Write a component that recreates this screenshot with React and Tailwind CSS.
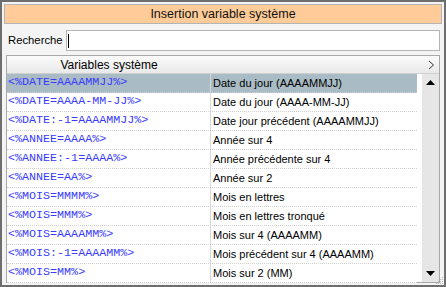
import React from "react";

const rows = [
  ["<%DATE=AAAAMMJJ%>", "Date du jour (AAAAMMJJ)"],
  ["<%DATE=AAAA-MM-JJ%>", "Date du jour (AAAA-MM-JJ)"],
  ["<%DATE:-1=AAAAMMJJ%>", "Date jour précédent (AAAAMMJJ)"],
  ["<%ANNEE=AAAA%>", "Année sur 4"],
  ["<%ANNEE:-1=AAAA%>", "Année précédente sur 4"],
  ["<%ANNEE=AA%>", "Année sur 2"],
  ["<%MOIS=MMMM%>", "Mois en lettres"],
  ["<%MOIS=MMM%>", "Mois en lettres tronqué"],
  ["<%MOIS=AAAAMM%>", "Mois sur 4 (AAAAMM)"],
  ["<%MOIS:-1=AAAAMM%>", "Mois précédent sur 4 (AAAAMM)"],
  ["<%MOIS=MM%>", "Mois sur 2 (MM)"],
];

export default function App() {
  const sans = { fontFamily: '"Liberation Sans", Arial, sans-serif' };
  return (
    <div
      className="w-[446px] h-[287px] bg-[#f4f4f4] border-2 border-[#6e6e6e] flex flex-col p-[2px] text-[12px] text-black overflow-hidden relative"
      style={sans}
    >
      <div className="h-[20px] bg-[#ffcc99] border border-[#b4b4b4] flex items-center justify-center text-[12.5px] text-[#111]">
        Insertion variable système
      </div>
      <div className="flex items-center mt-[6px] h-[21px]">
        <span className="pl-[4px] w-[62px] text-[11.3px]">Recherche</span>
        <div className="flex-1 h-[21px] bg-white border border-[#b4b4b4] mr-[2px] flex items-center pl-[1px]">
          <div className="w-px h-[14px] bg-black" />
        </div>
      </div>
      <div className="mt-[4px] ml-[2px] mr-[2px] h-[228px] border border-[#a8a8a8] bg-white flex flex-col">
        <div className="h-[18px] flex bg-gradient-to-b from-[#fbfbfb] to-[#e9e9e9] border-b border-[#cfcfcf] shrink-0">
          <div className="w-[204px] flex items-center justify-center text-[12px]">Variables système</div>
          <div className="flex-1" />
          <div className="w-[16px] flex items-center justify-center">
            <svg width="7" height="10" viewBox="0 0 7 10">
              <path d="M1 1 L5.5 5 L1 9" fill="none" stroke="#333" strokeWidth="1" />
            </svg>
          </div>
        </div>
        <div className="flex flex-1 min-h-0">
          <div className="flex-1 flex flex-col">
            {rows.map(([a, b], i) => (
              <div
                key={i}
                className={
                  "h-[19px] shrink-0 flex border-b border-dotted border-[#d0d0d0] mr-[5px] " +
                  (i === 0 ? "bg-[#a9bcc5]" : "bg-white")
                }
              >
                <div
                  className="w-[204px] pl-[1px] flex items-center text-[11.7px] text-[#3a3aff] border-r border-[#d8d8d8]"
                  style={{ fontFamily: '"Liberation Mono", "Courier New", monospace' }}
                >
                  {a}
                </div>
                <div className="flex-1 pl-[2px] flex items-center text-[11px]">{b}</div>
              </div>
            ))}
          </div>
          <div className="w-[17px] bg-[#e6e6e6] flex flex-col justify-between items-center py-[6px]">
            <svg width="9" height="5" viewBox="0 0 9 5">
              <path d="M0 5 L4.5 0 L9 5 Z" fill="#000" />
            </svg>
            <svg width="9" height="5" viewBox="0 0 9 5">
              <path d="M0 0 L4.5 5 L9 0 Z" fill="#000" />
            </svg>
          </div>
        </div>
      </div>
      <svg className="absolute right-0 bottom-0" width="10" height="10" viewBox="0 0 10 10">
        <g fill="#b8b8b8">
          <rect x="8" y="2" width="1" height="1" />
          <rect x="6" y="4" width="1" height="1" />
          <rect x="8" y="4" width="1" height="1" />
          <rect x="4" y="6" width="1" height="1" />
          <rect x="6" y="6" width="1" height="1" />
          <rect x="8" y="6" width="1" height="1" />
          <rect x="2" y="8" width="1" height="1" />
          <rect x="4" y="8" width="1" height="1" />
          <rect x="6" y="8" width="1" height="1" />
          <rect x="8" y="8" width="1" height="1" />
        </g>
      </svg>
    </div>
  );
}
